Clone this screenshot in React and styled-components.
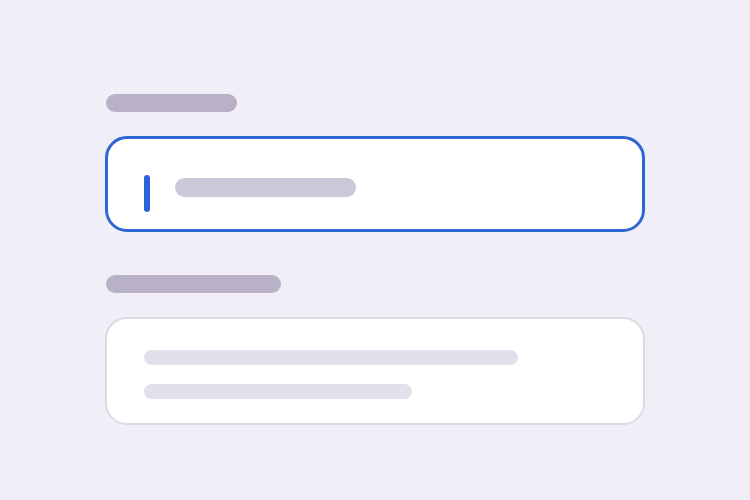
import React from "react";
import styled, { createGlobalStyle } from "styled-components";

const GlobalStyle = createGlobalStyle`
  html, body {
    margin: 0;
    padding: 0;
    background: #f0eef6;
    font-family: "Inter", "Liberation Sans", sans-serif;
  }
`;

const Page = styled.div`
  width: 750px;
  height: 500px;
  box-sizing: border-box;
  padding: 94px 105px 0;
  display: flex;
  flex-direction: column;
`;

const Field = styled.div`
  display: flex;
  flex-direction: column;
  gap: 24px;
  margin-bottom: ${(p) => p.$spacing || 0}px;
`;

const Label = styled.div`
  width: ${(p) => p.$width}px;
  height: 18px;
  margin-left: 1px;
  border-radius: 9px;
  background: #b9b2c7;
`;

const InputBox = styled.div`
  box-sizing: border-box;
  width: 540px;
  height: ${(p) => p.$height}px;
  border-radius: 22px;
  background: #ffffff;
  border: ${(p) => (p.$focused ? "3px solid #2e66d3" : "2px solid #dcd9e2")};
  display: flex;
  flex-direction: ${(p) => (p.$multi ? "column" : "row")};
  align-items: flex-start;
  gap: ${(p) => (p.$multi ? "19px" : "25px")};
  padding: ${(p) => (p.$multi ? "31px 0 0 37px" : "36px 0 0 36px")};
`;

const Caret = styled.div`
  width: 6px;
  height: 37px;
  border-radius: 3px;
  background: #2c63d6;
`;

const Placeholder = styled.div`
  width: 181px;
  height: 19px;
  margin-top: 3px;
  border-radius: 9.5px;
  background: #cdc8d9;
`;

const Line = styled.div`
  width: ${(p) => p.$width}px;
  height: 15px;
  border-radius: 8px;
  background: #e3e0ec;
`;

export default function App() {
  return (
    <>
      <GlobalStyle />
      <Page>
        <Field $spacing={43}>
          <Label $width={131} />
          <InputBox $focused $height={96}>
            <Caret />
            <Placeholder />
          </InputBox>
        </Field>
        <Field>
          <Label $width={175} />
          <InputBox $multi $height={108}>
            <Line $width={374} />
            <Line $width={268} />
          </InputBox>
        </Field>
      </Page>
    </>
  );
}
